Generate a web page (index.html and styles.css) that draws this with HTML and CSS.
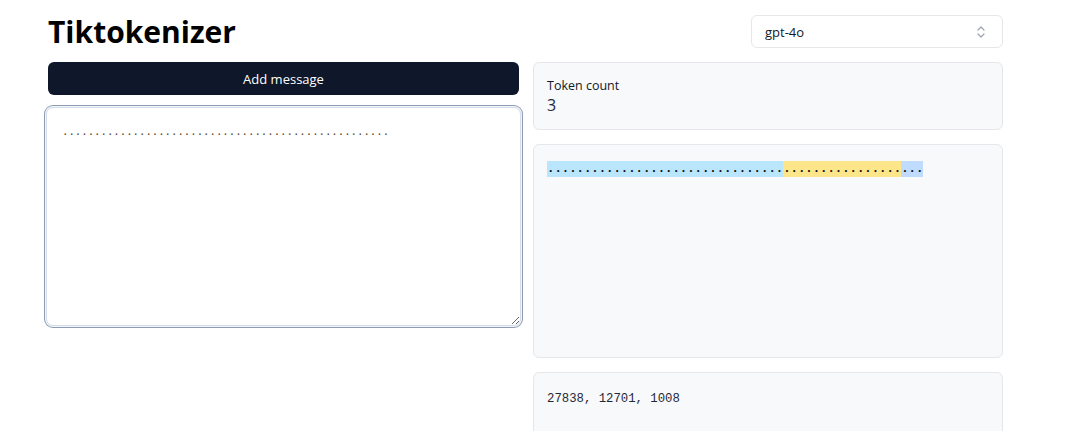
FILE: index.html
```html
<!DOCTYPE html>
<html lang="en">
<head>
<meta charset="utf-8">
<title>Tiktokenizer</title>
<link rel="stylesheet" href="styles.css">
</head>
<body>
<main class="page">
  <header class="header">
    <h1 class="title">Tiktokenizer</h1>
    <div class="select">
      <span class="select-value">gpt-4o</span>
      <svg class="select-icon" width="10" height="14" viewBox="0 0 10 14" fill="none" stroke="currentColor" stroke-width="1.2" stroke-linecap="round" stroke-linejoin="round">
        <path d="M2 5 L5 2 L8 5"/>
        <path d="M2 9 L5 12 L8 9"/>
      </svg>
    </div>
  </header>
  <div class="grid">
    <section class="left">
      <button class="btn" type="button">Add message</button>
      <textarea class="editor">...................................................</textarea>
    </section>
    <section class="right">
      <div class="card count-card">
        <div class="count-label">Token count</div>
        <div class="count-value">3</div>
      </div>
      <div class="card tokens-card">
        <div class="tokens"><span class="tok tok-a">................................</span><span class="tok tok-b">................</span><span class="tok tok-c">...</span></div>
      </div>
      <div class="card ids-card">
        <div class="ids">27838, 12701, 1008</div>
      </div>
    </section>
  </div>
</main>
</body>
</html>
```

FILE: styles.css
```css
* { box-sizing: border-box; }
html, body { margin: 0; padding: 0; background: #ffffff; }
body {
  font-family: "Open Sans", "Noto Sans", "Liberation Sans", sans-serif;
  color: #0f172a;
  overflow: hidden;
}
.page {
  width: 955px;
  margin-left: 48px;
  padding-top: 15px;
}
.header {
  display: flex;
  justify-content: space-between;
  align-items: center;
  height: 33px;
}
.title {
  margin: 0;
  font-size: 30px;
  font-weight: 700;
  letter-spacing: 0;
  color: #000;
  line-height: 33px;
}
.select {
  width: 252px;
  height: 33px;
  border: 1px solid #e5e7eb;
  border-radius: 6px;
  display: flex;
  align-items: center;
  justify-content: space-between;
  padding: 0 16px 0 13px;
  background: #fff;
}
.select-value { font-size: 13px; color: #111827; }
.select-icon { color: #9ca3af; }
.grid {
  display: grid;
  grid-template-columns: 471px 470px;
  column-gap: 14px;
  margin-top: 14px;
}
.left { display: flex; flex-direction: column; gap: 12px; }
.btn {
  height: 33px;
  border: none;
  border-radius: 6px;
  background: #0f172a;
  color: #fff;
  font-family: inherit;
  font-size: 13px;
  font-weight: 500;
}
.editor {
  margin: 0 -2px;
  height: 219px;
  border: 1px solid #d5dde8;
  border-radius: 7px;
  box-shadow: 0 0 0 1px #f1f4f8, 0 0 0 2px #8e9bb4;
  outline: none;
  padding: 16px 15px 12px;
  font-family: "Liberation Mono", monospace;
  font-size: 10.7px;
  line-height: 16px;
  color: #4b3a2a;
  resize: vertical;
  background: #fff;
}
.right { display: flex; flex-direction: column; gap: 14px; }
.card {
  background: #f8f9fb;
  border: 1px solid #e5e7eb;
  border-radius: 6px;
  padding: 14px 13px;
}
.count-card { height: 68px; }
.count-label { font-size: 12.5px; color: #111827; line-height: 17px; }
.count-value { font-size: 16px; color: #1f2937; line-height: 22px; }
.tokens-card { height: 214px; padding-top: 16px; }
.tokens {
  font-family: "Liberation Mono", monospace;
  font-size: 12.3px;
  line-height: 16px;
  color: #111;
  font-weight: 700;
}
.tok { display: inline-block; height: 16px; }
.tok-a { background: #bae6fd; }
.tok-b { background: #fde68a; }
.tok-c { background: #bfdbfe; }
.ids-card { height: 80px; padding-top: 18px; }
.ids {
  font-family: "Liberation Mono", monospace;
  font-size: 12.3px;
  line-height: 16px;
  color: #1f2937;
}
```
